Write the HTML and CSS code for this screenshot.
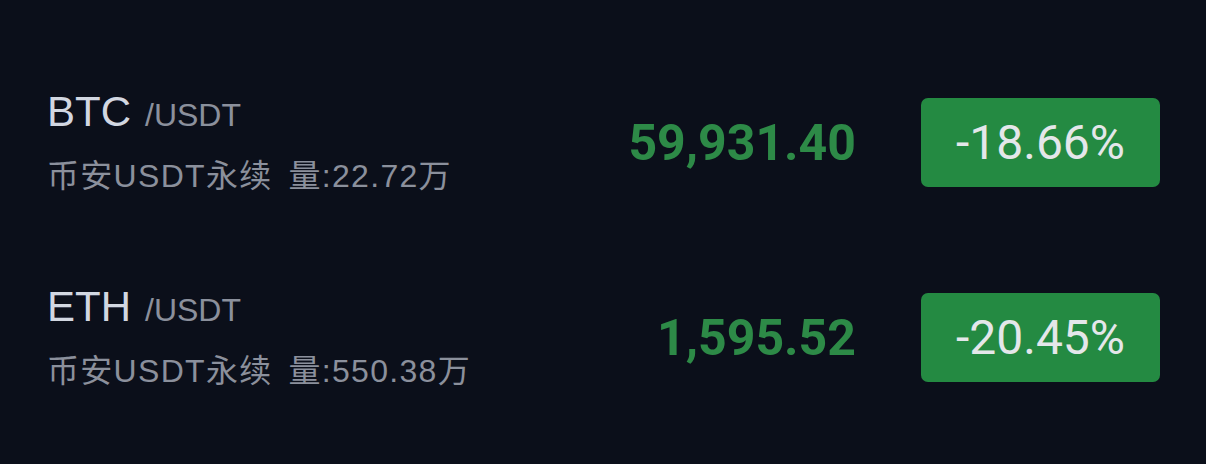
FILE: index.html
```html
<!DOCTYPE html>
<html lang="zh-CN">
<head>
<meta charset="utf-8">
<title>行情</title>
<link rel="stylesheet" href="styles.css">
</head>
<body>
<main class="market-list">
  <div class="ticker">
    <div class="pair">
      <div class="pair-name"><span class="base">BTC</span><span class="quote">/USDT</span></div>
      <div class="pair-meta"><span class="venue">币安USDT永续</span><span class="volume">量:22.72万</span></div>
    </div>
    <div class="price">59,931.40</div>
    <div class="change">-18.66%</div>
  </div>
  <div class="ticker">
    <div class="pair">
      <div class="pair-name"><span class="base">ETH</span><span class="quote">/USDT</span></div>
      <div class="pair-meta"><span class="venue">币安USDT永续</span><span class="volume">量:550.38万</span></div>
    </div>
    <div class="price">1,595.52</div>
    <div class="change">-20.45%</div>
  </div>
</main>
</body>
</html>
```
FILE: styles.css
```css
html, body {
  margin: 0;
  height: 100%;
  background: #0b0f1a;
}

.market-list {
  padding: 45px 46px 0 47px;
  display: flex;
  flex-direction: column;
}

.ticker {
  height: 195px;
  display: flex;
  align-items: center;
}

.pair {
  flex: 1;
  display: flex;
  flex-direction: column;
  gap: 18px;
  padding-top: 2px;
}

.pair-name {
  display: flex;
  align-items: baseline;
  gap: 14px;
  line-height: 44px;
  font-family: "Liberation Sans", Arial, sans-serif;
}

.base {
  font-size: 42px;
  color: #d2d7e1;
}

.quote {
  font-size: 32px;
  color: #8b909c;
}

.pair-meta {
  display: flex;
  gap: 16px;
  font-family: "Liberation Sans", "Noto Sans CJK SC", sans-serif;
  font-size: 32px;
  line-height: 42px;
  letter-spacing: 1.3px;
  color: #8b909c;
}

.price {
  font-family: Roboto, sans-serif;
  font-weight: 700;
  font-size: 50px;
  color: #2d8a47;
  margin-right: 65px;
}

.change {
  width: 239px;
  height: 89px;
  border-radius: 7px;
  background: #248a42;
  color: #e4e7ea;
  font-family: Roboto, sans-serif;
  font-size: 48px;
  display: flex;
  align-items: center;
  justify-content: center;
}
```
